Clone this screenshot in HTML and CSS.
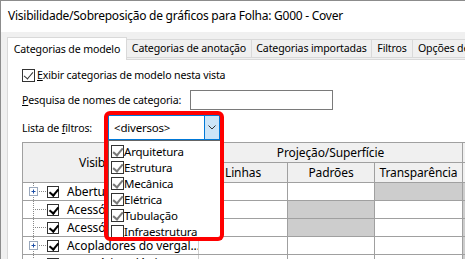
FILE: index.html
```html
<!DOCTYPE html>
<html lang="pt">
<head>
  <meta charset="UTF-8" />
  <title>Visibilidade/Sobreposição de gráficos</title>
  <link rel="stylesheet" href="styles.css">
</head>
<body>
  <div class="window">
    <div class="titlebar">Visibilidade/Sobreposição de gráficos para Folha: G000 - Cover</div>
    <div class="main">
      <div class="tabs">
        <div class="tab active tab-model">Categorias de modelo</div>
        <div class="tab tab-annot">Categorias de anotação</div>
        <div class="tab tab-import">Categorias importadas</div>
        <div class="tab tab-filter">Filtros</div>
        <div class="tab tab-view">Opções de visualização</div>
      </div>
      <div class="panel">
        <div class="row row-show">
          <span class="check on"></span>
          <span><u>E</u>xibir categorias de modelo nesta vista</span>
        </div>
        <div class="row row-search">
          <span class="label-search"><u>P</u>esquisa de nomes de categoria:</span>
          <span class="textbox"></span>
        </div>
        <div class="row row-filter">
          <span class="label-filter">Lista de <u>f</u>iltros:</span>
          <div class="combo-wrap">
            <div class="combo">
              <span class="combo-text">&lt;diversos&gt;</span>
              <span class="combo-btn">
                <svg width="8" height="5" viewBox="0 0 8 5"><path d="M0.5 0.5 L4 4 L7.5 0.5" fill="none" stroke="#333" stroke-width="1"/></svg>
              </span>
            </div>
            <ul class="droplist">
              <li><span class="check grey on"></span>Arquitetura</li>
              <li><span class="check grey on"></span>Estrutura</li>
              <li><span class="check grey on"></span>Mecânica</li>
              <li><span class="check grey on"></span>Elétrica</li>
              <li><span class="check grey on"></span>Tubulação</li>
              <li><span class="check"></span>Infraestrutura</li>
            </ul>
            <div class="highlight"></div>
          </div>
        </div>

        <table class="grid">
          <colgroup>
            <col class="c-name"><col class="c-lin"><col class="c-pad"><col class="c-tra"><col class="c-more">
          </colgroup>
          <thead>
            <tr>
              <th rowspan="2">Visibilidade</th>
              <th colspan="3">Projeção/Superfície</th>
              <th></th>
            </tr>
            <tr>
              <th>Linhas</th>
              <th>Padrões</th>
              <th>Transparência</th>
              <th></th>
            </tr>
          </thead>
          <tbody>
            <tr>
              <td>
                <div class="name">
                  <svg class="tree" width="24" height="17" viewBox="0 0 24 17"><path d="M10.5 0 V17 M10 8.5 H24" stroke="#888" stroke-dasharray="1 1" fill="none"/><rect x="6.5" y="4.5" width="8" height="8" fill="#fff" stroke="#9aa8bc"/><path d="M8.5 8.5 H12.5 M10.5 6.5 V10.5" stroke="#1c4fa8"/></svg>
                  <span class="check bold on"></span>Aberturas de shaft
                </div>
              </td>
              <td></td><td></td><td class="hatch"></td><td class="hatch"></td>
            </tr>
            <tr>
              <td>
                <div class="name">
                  <svg class="tree" width="24" height="17" viewBox="0 0 24 17"><path d="M10.5 0 V17 M10 8.5 H24" stroke="#888" stroke-dasharray="1 1" fill="none"/></svg>
                  <span class="check bold on"></span>Acessórios de duto
                </div>
              </td>
              <td></td><td class="hatch"></td><td></td><td class="hatch"></td>
            </tr>
            <tr>
              <td>
                <div class="name">
                  <svg class="tree" width="24" height="17" viewBox="0 0 24 17"><path d="M10.5 0 V17 M10 8.5 H24" stroke="#888" stroke-dasharray="1 1" fill="none"/></svg>
                  <span class="check bold on"></span>Acessórios de tubo
                </div>
              </td>
              <td></td><td class="hatch"></td><td></td><td class="hatch"></td>
            </tr>
            <tr>
              <td>
                <div class="name">
                  <svg class="tree" width="24" height="17" viewBox="0 0 24 17"><path d="M10.5 0 V17 M10 8.5 H24" stroke="#888" stroke-dasharray="1 1" fill="none"/><rect x="6.5" y="4.5" width="8" height="8" fill="#fff" stroke="#9aa8bc"/><path d="M8.5 8.5 H12.5 M10.5 6.5 V10.5" stroke="#1c4fa8"/></svg>
                  <span class="check bold on"></span>Acopladores do vergal...
                </div>
              </td>
              <td></td><td></td><td></td><td class="hatch"></td>
            </tr>
            <tr>
              <td>
                <div class="name">
                  <svg class="tree" width="24" height="17" viewBox="0 0 24 17"><path d="M10.5 0 V17 M10 8.5 H24" stroke="#888" stroke-dasharray="1 1" fill="none"/></svg>
                  <span class="check bold on"></span>Acessórios elétricos
                </div>
              </td>
              <td></td><td></td><td></td><td class="hatch"></td>
            </tr>
          </tbody>
        </table>
      </div>
    </div>
  </div>
</body>
</html>
```

FILE: styles.css
```css
* {
  box-sizing: border-box;
}
body {
  margin: 0;
  width: 465px;
  height: 259px;
  overflow: hidden;
  font-family: 'Segoe UI', 'Noto Sans', sans-serif;
  font-size: 10.6px;
  letter-spacing: -0.15px;
  color: #000;
  background: #f0f0f0;
}
.window {
  height: 259px;
  overflow: hidden;
  border-top: 1px solid #8c8c8c;
  border-left: 1px solid #8c8c8c;
  background: #f0f0f0;
}
.titlebar {
  height: 31px;
  background: #fff;
  padding-left: 7px;
  line-height: 30px;
  font-size: 12px;
  letter-spacing: -0.25px;
  white-space: nowrap;
}
.main {
  padding: 5px 0 0 6px;
  overflow: hidden;
}
.tabs {
  display: flex;
  align-items: flex-end;
  white-space: nowrap;
  position: relative;
  z-index: 1;
}
.tab {
  flex: none;
  height: 19px;
  line-height: 17px;
  text-align: center;
  border: 1px solid #d9d9d9;
  border-left: none;
  background: #f0f0f0;
  margin-bottom: 1px;
}
.tab.active {
  height: 23px;
  line-height: 22px;
  border-left: 1px solid #d9d9d9;
  border-bottom: none;
  background: #fff;
  margin-bottom: -1px;
}
.tab-model { width: 120px; }
.tab-annot { width: 125px; }
.tab-import { width: 120px; }
.tab-filter { width: 41px; }
.tab-view { width: 124px; padding-left: 5px; text-align: left; }
.panel {
  background: #fff;
  border: 1px solid #d9d9d9;
  padding: 7px 0 0 14px;
  height: 220px;
  width: 470px;
}
.row {
  display: flex;
  align-items: center;
  white-space: nowrap;
}
.row-show {
  height: 16px;
}
.row-show .check {
  margin-right: 2px;
}
.row-search {
  height: 20px;
  margin-top: 7px;
}
.label-search {
  width: 168px;
}
.textbox {
  width: 143px;
  height: 20px;
  border: 1px solid #7a7a7a;
}
.row-filter {
  height: 25px;
  margin-top: 5px;
}
.label-filter {
  width: 86px;
}
.combo-wrap {
  position: relative;
  width: 112px;
  height: 25px;
}
.combo {
  display: flex;
  height: 25px;
  border: 1px solid #0078d7;
}
.combo-text {
  flex: 1;
  padding-left: 5px;
  line-height: 23px;
  font-size: 11.5px;
  letter-spacing: -0.2px;
}
.combo-btn {
  width: 15px;
  border-left: 1px solid #0078d7;
  background: #cce4f7;
  display: flex;
  align-items: center;
  justify-content: center;
}
.droplist {
  position: absolute;
  top: 25px;
  left: 0;
  width: 114px;
  margin: 0;
  padding: 2px 0 0;
  list-style: none;
  background: #fff;
  border: 1px solid #646464;
  z-index: 2;
  font-size: 11.5px;
  letter-spacing: -0.2px;
}
.droplist li {
  height: 16px;
  display: flex;
  align-items: center;
  padding-left: 2px;
}
.highlight {
  position: absolute;
  left: -4px;
  top: -4px;
  width: 120px;
  height: 130px;
  border: 4px solid #f00;
  border-radius: 6px;
  z-index: 3;
}
.check {
  display: inline-block;
  width: 13px;
  height: 13px;
  border: 1px solid #333;
  background: #fff;
  position: relative;
  flex: none;
}
.check.on::after {
  content: "";
  position: absolute;
  left: 3px;
  top: 0px;
  width: 4px;
  height: 8px;
  border: solid #333;
  border-width: 0 1px 1px 0;
  transform: rotate(40deg);
}
.check.grey.on::after {
  border-color: #7a7a7a;
  border-width: 0 2px 2px 0;
}
.check.bold {
  width: 12px;
  height: 12px;
}
.check.bold.on::after {
  left: 3px;
  top: 0;
  width: 4px;
  height: 7px;
  border-color: #000;
  border-width: 0 2px 2px 0;
}
.grid {
  margin-top: 2px;
  border-collapse: collapse;
  table-layout: fixed;
  width: 480px;
  border: 1px solid #828790;
  font-size: 12px;
  letter-spacing: -0.1px;
}
.c-name { width: 176px; }
.c-lin { width: 89px; }
.c-pad { width: 87px; }
.c-tra { width: 88px; }
.c-more { width: 40px; }
.grid th {
  height: 20px;
  background: #f0f0f0;
  font-weight: normal;
  border: 1px solid #a0a0a0;
  padding: 0;
  white-space: nowrap;
}
.grid td {
  height: 18px;
  border: 1px solid #a0a0a0;
  padding: 0;
}
.grid td:first-child {
  border-right-color: #d0d0d0;
}
.name {
  display: flex;
  align-items: center;
  white-space: nowrap;
  overflow: hidden;
  height: 17px;
}
.tree {
  display: block;
  flex: none;
}
.name .check {
  margin-right: 8px;
}
.hatch {
  background: repeating-conic-gradient(#9a9a9a 0 25%, #fff 0 50%) 0 0 / 2px 2px;
}
```
